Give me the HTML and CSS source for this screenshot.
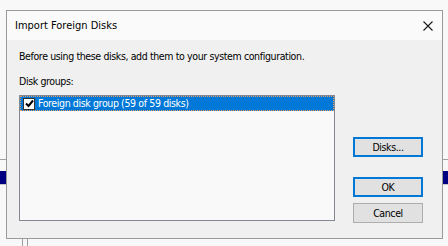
FILE: index.html
```html
<!DOCTYPE html>
<html>
<head>
<meta charset="utf-8">
<link rel="stylesheet" href="styles.css">
</head>
<body>
<div class="backdrop">
  <div class="bg-line bg-line-top"></div>
  <div class="bg-bar"></div>
  <div class="bg-line bg-line-bottom"></div>
  <div class="bg-vline bg-vline-a"></div>
  <div class="bg-vline bg-vline-b"></div>
</div>
<div class="dialog">
  <div class="titlebar">
    <span class="title">Import Foreign Disks</span>
    <svg class="close" width="10" height="10" viewBox="0 0 10 10"><path d="M0.5 0.5 L9.5 9.5 M9.5 0.5 L0.5 9.5" stroke="#1a1a1a" stroke-width="1.1" fill="none"/></svg>
  </div>
  <div class="content">
    <p class="intro">Before using these disks, add them to your system configuration.</p>
    <p class="label">Disk groups:</p>
    <div class="main">
      <div class="listbox">
        <div class="row selected">
          <span class="check"><svg width="9" height="9" viewBox="0 0 9 9"><path d="M1 4.5 L3.5 7 L8 1.5" stroke="#000" stroke-width="2" fill="none"/></svg></span>
          <span class="row-text">Foreign disk group (59 of 59 disks)</span>
        </div>
      </div>
      <div class="buttons">
        <button class="btn btn-focus btn-disks">Disks...</button>
        <button class="btn btn-focus btn-ok">OK</button>
        <button class="btn btn-cancel">Cancel</button>
      </div>
    </div>
  </div>
</div>
</body>
</html>
```
FILE: styles.css
```css
* { box-sizing: border-box; }
html, body { margin: 0; }
body {
  width: 448px;
  height: 246px;
  overflow: hidden;
  background: #f8f8f8;
  font-family: "DejaVu Sans Condensed", "DejaVu Sans", sans-serif;
  font-stretch: condensed;
  font-size: 10.5px;
  letter-spacing: -0.38px;
  color: #000;
  position: relative;
  padding: 10px 5px 0 6px;
}
.backdrop { position: absolute; inset: 0; }
.bg-line { position: absolute; left: 0; right: 0; height: 1px; background: #a0a0a0; }
.bg-line-top { top: 159px; }
.bg-line-bottom { top: 184px; background: #c8c8c8; }
.bg-bar { position: absolute; left: 0; right: 0; top: 171px; height: 13px; background: #000080; }
.bg-vline { position: absolute; top: 239px; width: 1px; height: 7px; background: #a0a0a0; }
.bg-vline-a { left: 22px; }
.bg-vline-b { left: 27px; }

.dialog {
  position: relative;
  width: 437px;
  height: 229px;
  border: 1px solid #9a9a9a;
  background: #f0f0f0;
  display: flex;
  flex-direction: column;
}
.titlebar {
  height: 29px;
  flex: none;
  background: #fafafa;
  display: flex;
  align-items: center;
  justify-content: space-between;
  padding: 0 9px 0 8px;
}
.title { font-size: 11px; letter-spacing: 0; color: #000; }
.close { display: block; }
.content { padding: 9px 0 0 12px; }
p { margin: 0; line-height: 15px; }
.label { margin-top: 10px; }
.main { display: flex; margin-top: 6px; }
.listbox {
  width: 316px;
  height: 126px;
  border: 1px solid #828790;
  background: #f9f9f9;
}
.row {
  height: 15px;
  display: flex;
  align-items: center;
  padding-left: 2px;
}
.row.selected {
  background: #0078d7;
  color: #fff;
  border: 1px dotted #e8a060;
}
.check {
  width: 12px;
  height: 12px;
  background: #fff;
  border: 1px solid #333;
  display: flex;
  align-items: center;
  justify-content: center;
  margin-right: 3px;
}
.check svg { display: block; }
.row-text { line-height: 13px; }
.buttons {
  margin-left: 18px;
  display: flex;
  flex-direction: column;
}
.btn {
  width: 70px;
  height: 20px;
  font: inherit;
  letter-spacing: inherit;
  color: #000;
  padding: 0;
  background: #e1e1e1;
  border: 1px solid #adadad;
}
.btn-focus { border: 2px solid #0078d7; }
.btn-disks { margin-top: 42px; }
.btn-ok { margin-top: 20px; }
.btn-cancel { margin-top: 6px; }
```
